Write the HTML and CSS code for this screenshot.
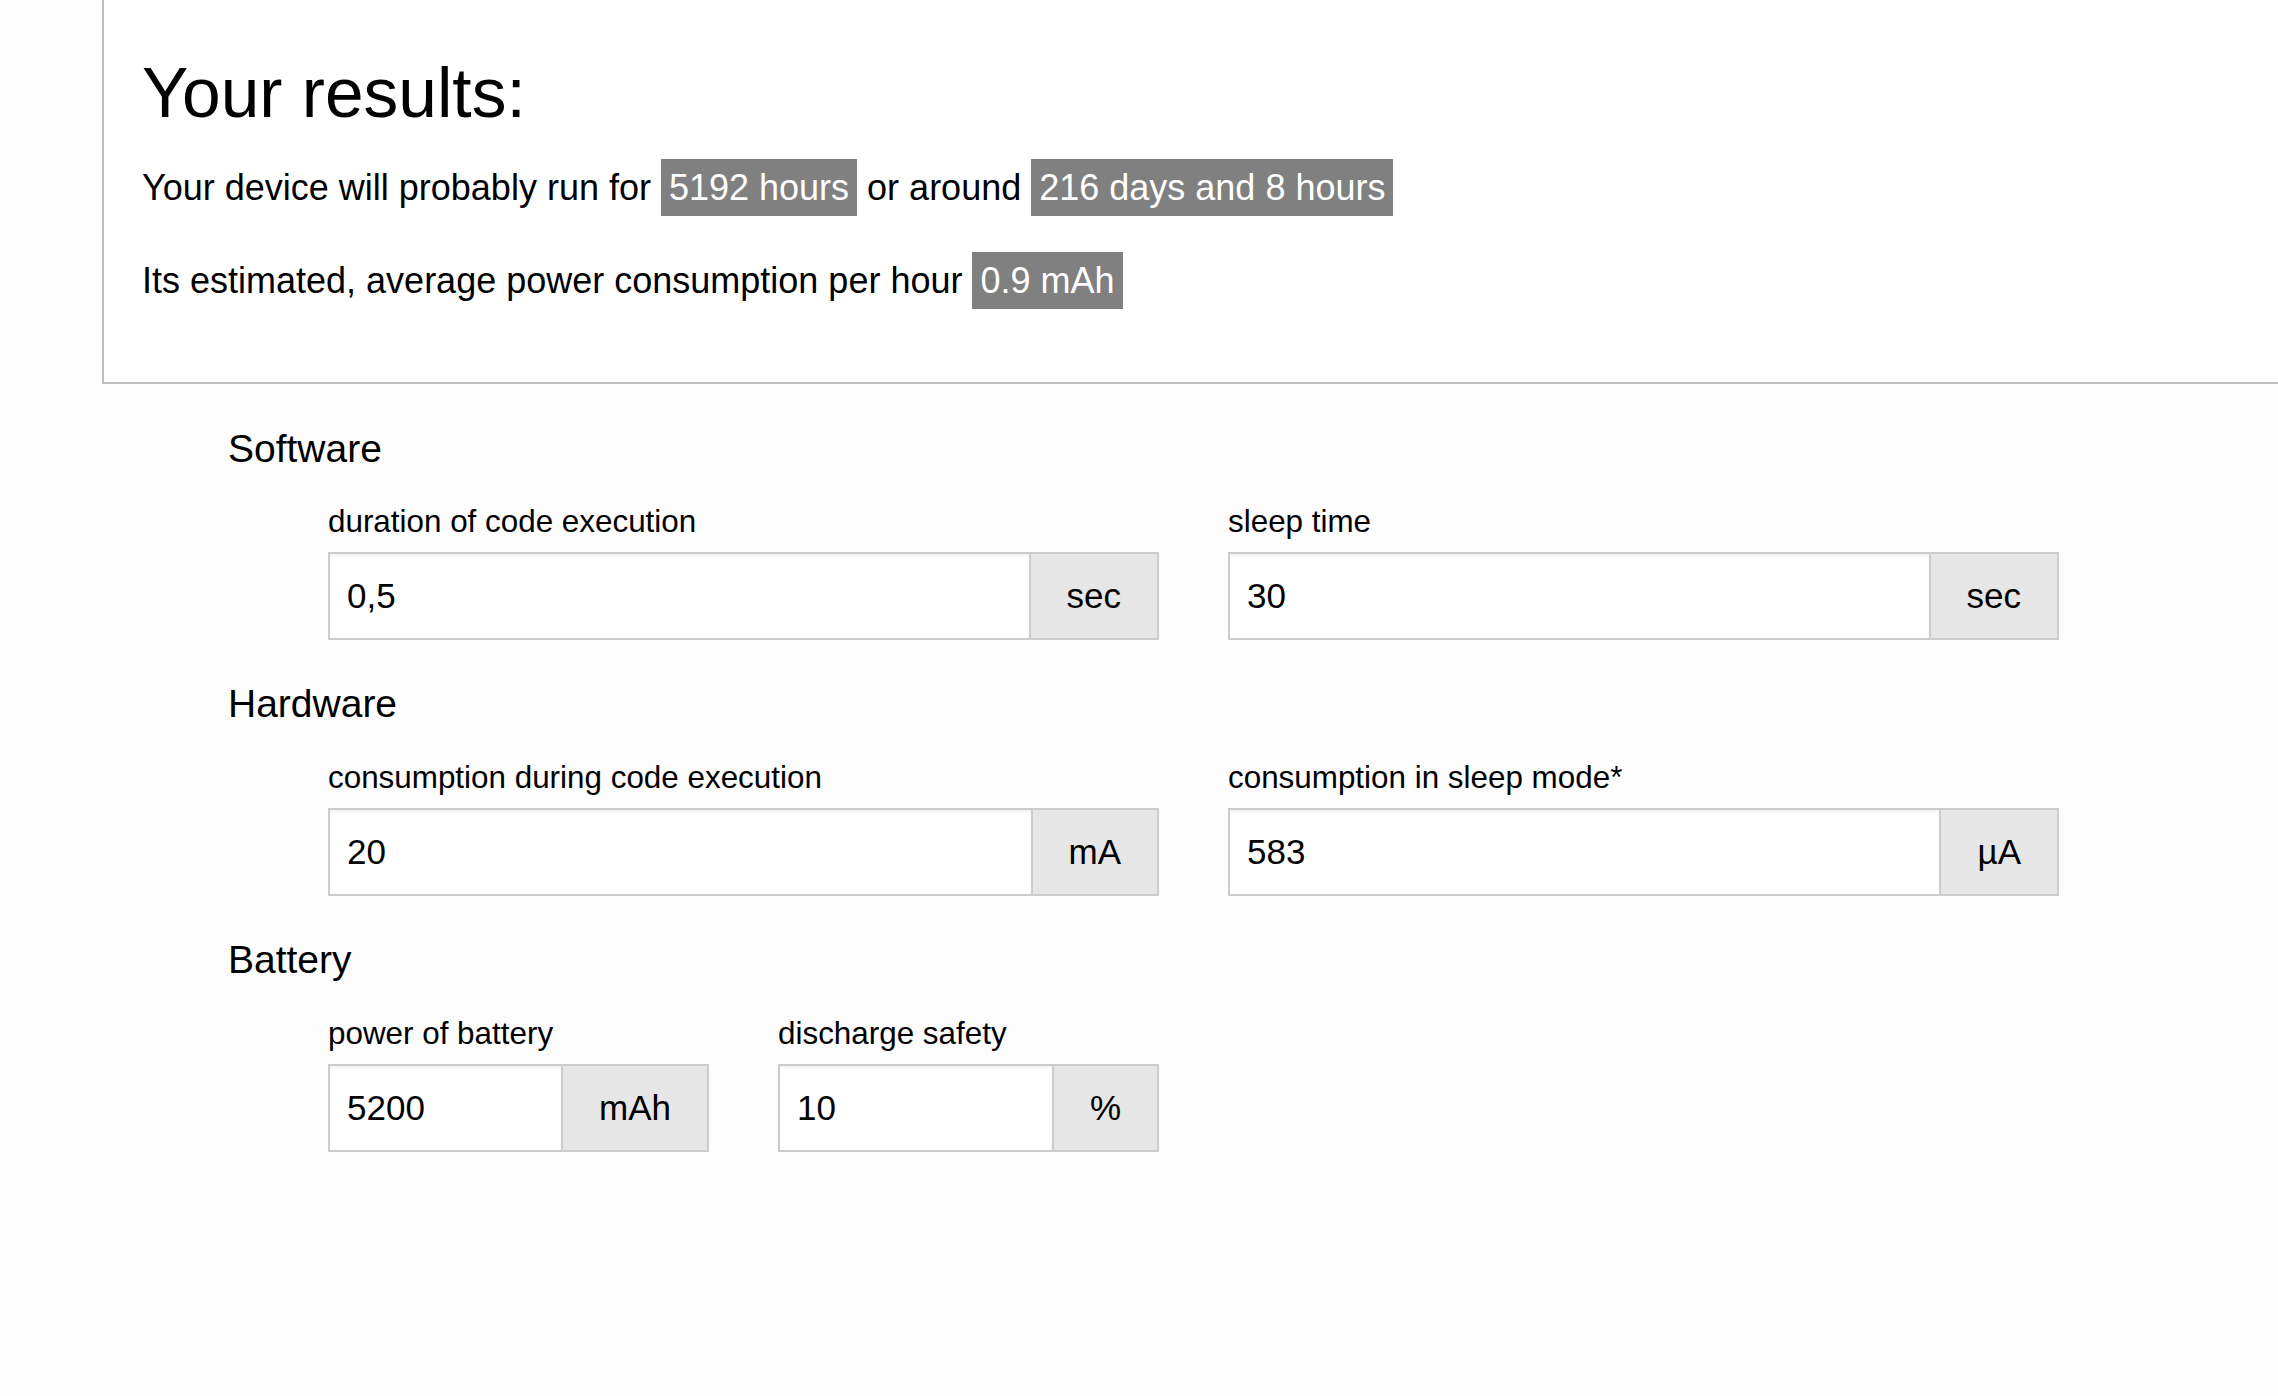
FILE: index.html
```html
<!DOCTYPE html>
<html lang="en">
<head>
<meta charset="utf-8">
<title>Battery runtime calculator</title>
<link rel="stylesheet" href="styles.css">
</head>
<body>
<section class="results">
  <h1 class="results-title">Your results:</h1>
  <p class="results-line">Your device will probably run for <span class="hl">5192 hours</span> or around <span class="hl">216 days and 8 hours</span></p>
  <p class="results-line">Its estimated, average power consumption per hour <span class="hl">0.9 mAh</span></p>
</section>

<form class="calc">
  <div class="section">
    <h2 class="section-title">Software</h2>
    <div class="fields">
      <div class="field span2">
        <label class="field-label">duration of code execution</label>
        <div class="input-group">
          <input class="input" type="text" value="0,5">
          <span class="addon">sec</span>
        </div>
      </div>
      <div class="field span2">
        <label class="field-label">sleep time</label>
        <div class="input-group">
          <input class="input" type="text" value="30">
          <span class="addon">sec</span>
        </div>
      </div>
    </div>
  </div>

  <div class="section">
    <h2 class="section-title">Hardware</h2>
    <div class="fields">
      <div class="field span2">
        <label class="field-label">consumption during code execution</label>
        <div class="input-group">
          <input class="input" type="text" value="20">
          <span class="addon">mA</span>
        </div>
      </div>
      <div class="field span2">
        <label class="field-label">consumption in sleep mode*</label>
        <div class="input-group">
          <input class="input" type="text" value="583">
          <span class="addon">µA</span>
        </div>
      </div>
    </div>
  </div>

  <div class="section">
    <h2 class="section-title">Battery</h2>
    <div class="fields">
      <div class="field">
        <label class="field-label">power of battery</label>
        <div class="input-group">
          <input class="input" type="text" value="5200">
          <span class="addon">mAh</span>
        </div>
      </div>
      <div class="field">
        <label class="field-label">discharge safety</label>
        <div class="input-group">
          <input class="input" type="text" value="10">
          <span class="addon">%</span>
        </div>
      </div>
    </div>
  </div>
</form>
</body>
</html>
```
FILE: styles.css
```css
html {
  background: #fcfcfc;
}

body {
  margin: 0;
  background: #fcfcfc;
  color: #000;
  font-family: "Liberation Sans", Arial, sans-serif;
  min-height: 1396px;
}

/* ---------- results box ---------- */
.results {
  margin-left: 102px;
  padding: 53px 0 72.5px 38px;
  background: #fff;
  border-left: 2px solid #bfbfbf;
  border-bottom: 2px solid #bfbfbf;
}

.results-title {
  margin: 0 0 25.5px;
  font-size: 69.5px;
  font-weight: normal;
  line-height: 80px;
}

.results-line {
  margin: 0;
  font-size: 36px;
  line-height: 58px;
}

.results-line + .results-line {
  margin-top: 35px;
}

.hl {
  background: #808080;
  color: #fff;
  padding: 8px;
}

/* ---------- form ---------- */
.calc {
  padding-left: 228px;
}

.section {
  padding-top: 42.5px;
}

.section-title {
  margin: 0 0 33.6px;
  font-size: 39px;
  font-weight: normal;
  line-height: 44px;
}

.fields {
  margin-left: 100px;
  display: grid;
  grid-template-columns: repeat(4, 381px);
  column-gap: 69px;
}

.field {
  display: flex;
  flex-direction: column;
  min-width: 0;
}

.span2 {
  grid-column: span 2;
}

.field-label {
  font-size: 31.4px;
  line-height: 36px;
  margin-bottom: 11.9px;
}

.input-group {
  display: flex;
  height: 88px;
}

.input {
  flex: 1 1 auto;
  min-width: 0;
  box-sizing: border-box;
  height: 88px;
  margin: 0;
  padding: 0 17px;
  border: 2px solid #cccccc;
  border-radius: 0;
  background: #fff;
  box-shadow: inset 0 2px 2px rgba(0, 0, 0, 0.05);
  font-family: "Liberation Sans", Arial, sans-serif;
  font-size: 35px;
  color: #000;
  outline: none;
}

.addon {
  flex: none;
  box-sizing: border-box;
  height: 88px;
  display: flex;
  align-items: center;
  padding: 0 36px;
  border: 2px solid #cccccc;
  border-left: none;
  background: #e6e6e6;
  font-size: 35px;
  color: #000;
}
```
